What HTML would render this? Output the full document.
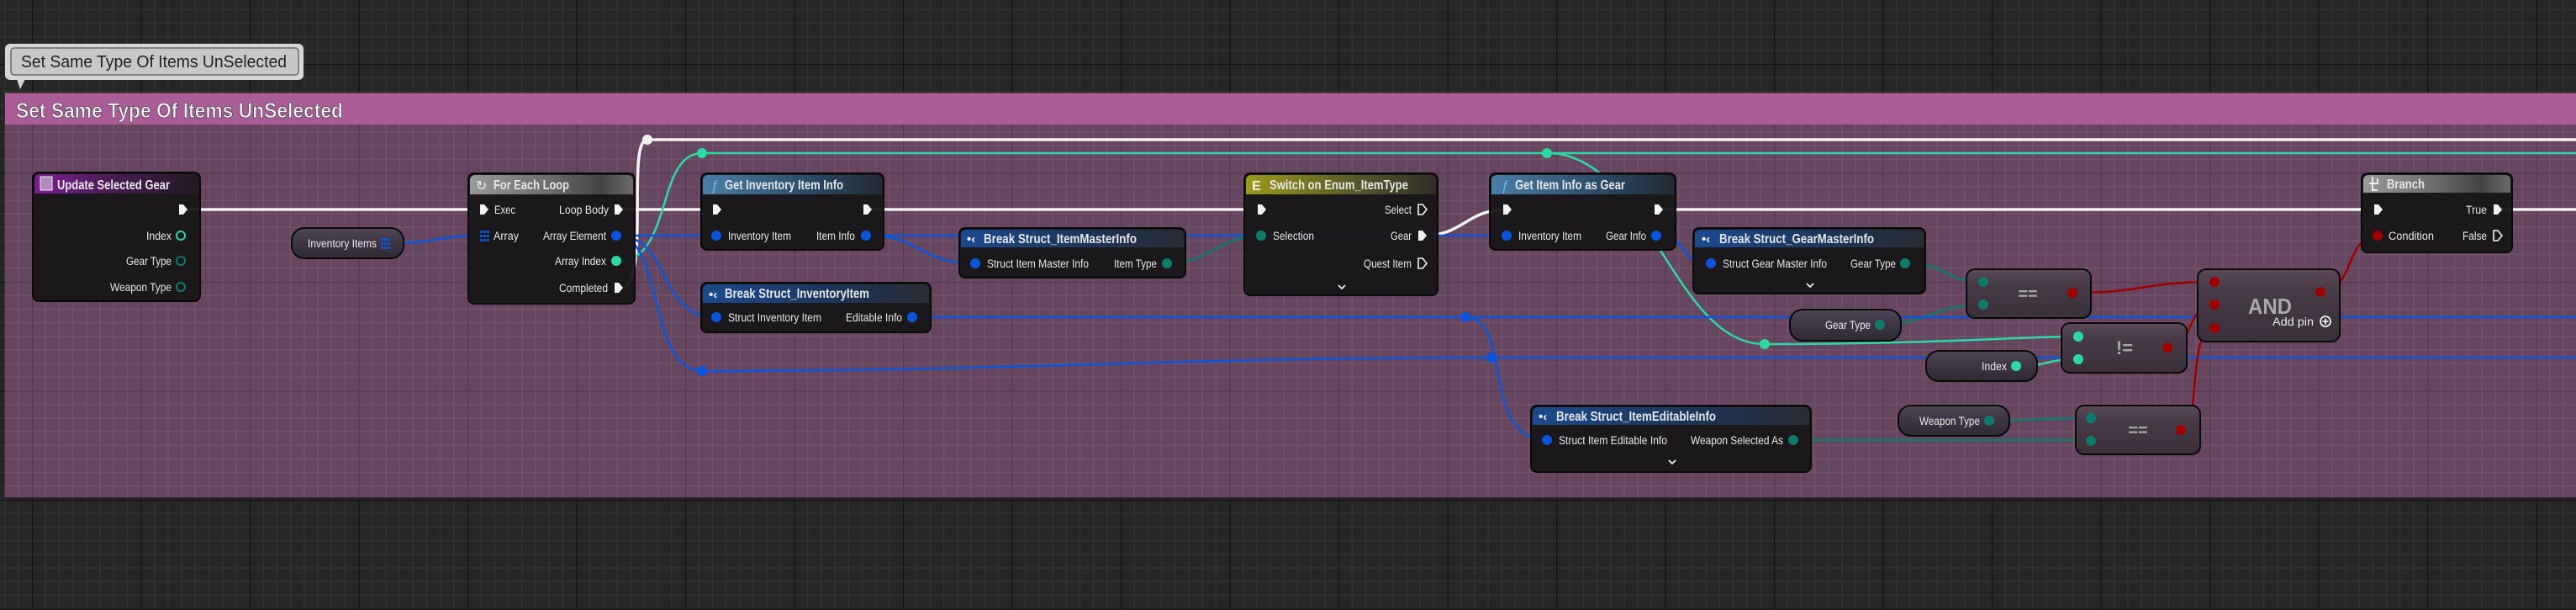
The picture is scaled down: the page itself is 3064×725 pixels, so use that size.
<!DOCTYPE html>
<html><head><meta charset="utf-8"><style>
html,body{margin:0;padding:0;background:#262626;}
svg{display:block}
text{font-family:"Liberation Sans",sans-serif;}
.t{font-size:16px;font-weight:bold;fill:#e6e6e6;}
.l{font-size:13.5px;fill:#e8e8e8;}
</style></head><body>
<svg width="3064" height="725" viewBox="0 0 3064 725" xmlns="http://www.w3.org/2000/svg">
<defs>
<pattern id="gd" patternUnits="userSpaceOnUse" x="38" y="76" width="129.5" height="129.5">
<rect width="129.5" height="129.5" fill="#262626"/>
<g stroke="#303030" stroke-width="1.6">
<path d="M16.2 0V130M32.4 0V130M48.6 0V130M64.8 0V130M81 0V130M97.1 0V130M113.3 0V130"/>
<path d="M0 16.2H130M0 32.4H130M0 48.6H130M0 64.8H130M0 81H130M0 97.1H130M0 113.3H130"/>
</g>
<path d="M0 0V130M0 0H130" stroke="#141414" stroke-width="2.5"/>
</pattern>
<pattern id="gc" patternUnits="userSpaceOnUse" x="38" y="76" width="129.5" height="129.5">
<rect width="129.5" height="129.5" fill="#66455f"/>
<g stroke="#70506a" stroke-width="1.6">
<path d="M16.2 0V130M32.4 0V130M48.6 0V130M64.8 0V130M81 0V130M97.1 0V130M113.3 0V130"/>
<path d="M0 16.2H130M0 32.4H130M0 48.6H130M0 64.8H130M0 81H130M0 97.1H130M0 113.3H130"/>
</g>
<path d="M0 0V130M0 0H130" stroke="#573852" stroke-width="2.5"/>
</pattern>
<linearGradient id="hPur" x1="0" x2="1"><stop offset="0" stop-color="#7d1d93"/><stop offset="0.6" stop-color="#3c1b44"/><stop offset="1" stop-color="#221a24"/></linearGradient>
<linearGradient id="hGry" x1="0" x2="1"><stop offset="0" stop-color="#9a9a9a"/><stop offset="0.5" stop-color="#6a6a6a"/><stop offset="0.8" stop-color="#444"/><stop offset="1" stop-color="#6a6a6a"/></linearGradient>
<linearGradient id="hFn" x1="0" x2="1"><stop offset="0" stop-color="#4a7fa8"/><stop offset="0.6" stop-color="#2a4a66"/><stop offset="1" stop-color="#222a33"/></linearGradient>
<linearGradient id="hSt" x1="0" x2="1"><stop offset="0" stop-color="#1c4a8e"/><stop offset="0.6" stop-color="#1d3356"/><stop offset="1" stop-color="#282c33"/></linearGradient>
<linearGradient id="hSw" x1="0" x2="1"><stop offset="0" stop-color="#9a9a1c"/><stop offset="0.6" stop-color="#55552a"/><stop offset="1" stop-color="#2e2e28"/></linearGradient>
<linearGradient id="pill" x1="0" y1="0" x2="0" y2="1"><stop offset="0" stop-color="#4e4656"/><stop offset="0.5" stop-color="#3d3544"/><stop offset="1" stop-color="#2e2a33"/></linearGradient>
<linearGradient id="op" x1="0" y1="0" x2="0" y2="1"><stop offset="0" stop-color="#5a4a58"/><stop offset="0.3" stop-color="#463a46"/><stop offset="1" stop-color="#3a303a"/></linearGradient>
</defs>

<rect width="3064" height="725" fill="url(#gd)"/>
<!-- comment -->
<rect x="6" y="110" width="3070" height="484" fill="url(#gc)"/>
<rect x="6" y="591" width="3070" height="3" fill="#2a1e28"/>
<rect x="6" y="111" width="3070" height="37" fill="#a95c96"/>
<text x="19" y="140" font-size="25" font-weight="bold" fill="#f0f0f0" stroke="#333" stroke-width="0.6" textLength="389" lengthAdjust="spacingAndGlyphs">Set Same Type Of Items UnSelected</text>
<!-- bubble -->
<rect x="6" y="52" width="355" height="43" rx="6" fill="#d6d6d6"/>
<path d="M20 94 L24 106 L30 94Z" fill="#d6d6d6"/>
<rect x="13" y="57" width="342" height="32" rx="4" fill="#c8c8c8" stroke="#6a6a6a" stroke-width="1.5"/>
<text x="25" y="80" font-size="20" fill="#222" textLength="316" lengthAdjust="spacingAndGlyphs">Set Same Type Of Items UnSelected</text>

<!-- WIRES -->
<g fill="none">
<g stroke="#f2f2f2" stroke-width="3.5">
<path d="M221 249H557"/>
<path d="M738 249H834"/>
<path d="M1034 249H1480"/>
<path d="M1694 280C1740 280 1745 249 1792 249"/>
<path d="M1975 249H2809"/>
<path d="M2973 249H3064"/>
<path d="M738 342C775 342 744 166 770 166H3064"/>
</g>
<g stroke="#2bd9a4" stroke-width="2.5">
<path d="M736 310C800 310 780 182 835 182H3064"/>
<path d="M1840 182C1960 182 1990 409 2099 409C2300 409 2400 400 2472 400"/>
<path d="M2398 435C2440 435 2430 427 2472 427"/>
</g>
<g stroke="#0e7a6c" stroke-width="2.5">
<path d="M1388 313C1440 313 1450 280 1500 280"/>
<path d="M2266 313C2320 313 2310 335 2359 335"/>
<path d="M2236 386C2290 386 2300 362 2359 362"/>
<path d="M2366 500C2420 500 2430 497 2487 497"/>
<path d="M2133 523H2487"/>
</g>
<g stroke="#0b55dd" stroke-width="2.5">
<path d="M464 289C520 289 520 280 575 280"/>
<path d="M733 280H852"/>
<path d="M1051 280H1792"/>
<path d="M733 280C800 280 780 377 852 377"/>
<path d="M733 280C790 280 770 441 835 441C1200 441 1400 425 1774 425H3064"/>
<path d="M1030 280C1100 280 1090 313 1160 313"/>
<path d="M1085 377H3064"/>
<path d="M1743 377C1800 377 1760 523 1840 523"/>
<path d="M1970 280C2010 280 1995 313 2035 313"/>
</g>
<g stroke="#a00000" stroke-width="2.5">
<path d="M2465 348C2550 348 2550 335 2634 335"/>
<path d="M2578 413C2610 413 2600 362 2634 362"/>
<path d="M2594 511C2620 511 2600 390 2634 390"/>
<path d="M2760 347C2800 347 2790 280 2828 280"/>
</g>
</g>
<circle cx="770" cy="166" r="6" fill="#f2f2f2"/>
<circle cx="835" cy="182" r="6" fill="#2bd9a4"/>
<circle cx="1840" cy="182" r="6" fill="#2bd9a4"/>
<circle cx="2099" cy="409" r="6" fill="#2bd9a4"/>
<circle cx="835" cy="441" r="6" fill="#0b55dd"/>
<circle cx="1743" cy="377" r="6" fill="#0b55dd"/>
<circle cx="1774" cy="425" r="6" fill="#0b55dd"/>

<!-- NODES -->
<g stroke="#0a0a0a" stroke-width="2">
<rect x="39" y="205" width="199" height="153" rx="7" fill="#171617" fill-opacity="0.95"/>
<rect x="557" y="206" width="198" height="155" rx="7" fill="#171617" fill-opacity="0.95"/>
<rect x="834" y="206" width="217" height="91" rx="7" fill="#171617" fill-opacity="0.95"/>
<rect x="834" y="336" width="273" height="59" rx="7" fill="#171617" fill-opacity="0.95"/>
<rect x="1141" y="271" width="269" height="59" rx="7" fill="#171617" fill-opacity="0.95"/>
<rect x="1480" y="206" width="230" height="145" rx="7" fill="#171617" fill-opacity="0.95"/>
<rect x="1772" y="206" width="221" height="91" rx="7" fill="#171617" fill-opacity="0.95"/>
<rect x="2014" y="271" width="276" height="78" rx="7" fill="#171617" fill-opacity="0.95"/>
<rect x="1821" y="482" width="333" height="79" rx="7" fill="#171617" fill-opacity="0.95"/>
<rect x="2809" y="206" width="179" height="94" rx="7" fill="#171617" fill-opacity="0.95"/>
<rect x="347" y="271" width="133" height="36" rx="15" fill="url(#pill)"/>
<rect x="2129" y="368" width="132" height="37" rx="15" fill="url(#pill)"/>
<rect x="2291" y="417" width="132" height="36" rx="15" fill="url(#pill)"/>
<rect x="2258" y="482" width="132" height="36" rx="15" fill="url(#pill)"/>
<rect x="2339" y="320" width="148" height="58" rx="10" fill="url(#op)"/>
<rect x="2614" y="320" width="169" height="86" rx="10" fill="url(#op)"/>
<rect x="2452" y="384" width="149" height="59" rx="10" fill="url(#op)"/>
<rect x="2469" y="482" width="148" height="58" rx="10" fill="url(#op)"/>
</g>
<!-- headers -->
<path d="M41 230V213a6 6 0 0 1 6-6H230a6 6 0 0 1 6 6V230Z" fill="url(#hPur)"/>
<path d="M559 231V214a6 6 0 0 1 6-6H747a6 6 0 0 1 6 6V231Z" fill="url(#hGry)"/>
<path d="M836 231V214a6 6 0 0 1 6-6H1043a6 6 0 0 1 6 6V231Z" fill="url(#hFn)"/>
<path d="M836 360V344a6 6 0 0 1 6-6H1099a6 6 0 0 1 6 6V360Z" fill="url(#hSt)"/>
<path d="M1143 294V279a6 6 0 0 1 6-6H1402a6 6 0 0 1 6 6V294Z" fill="url(#hSt)"/>
<path d="M1482 231V214a6 6 0 0 1 6-6H1702a6 6 0 0 1 6 6V231Z" fill="url(#hSw)"/>
<path d="M1774 231V214a6 6 0 0 1 6-6H1985a6 6 0 0 1 6 6V231Z" fill="url(#hFn)"/>
<path d="M2016 294V279a6 6 0 0 1 6-6H2282a6 6 0 0 1 6 6V294Z" fill="url(#hSt)"/>
<path d="M1823 505V490a6 6 0 0 1 6-6H2146a6 6 0 0 1 6 6V505Z" fill="url(#hSt)"/>
<path d="M2811 229V214a6 6 0 0 1 6-6H2980a6 6 0 0 1 6 6V229Z" fill="url(#hGry)"/>

<!-- titles & icons -->
<rect x="48" y="210" width="14" height="16" fill="#b08ab8" stroke="#eee" stroke-width="1"/>
<text class="t" x="68" y="225" textLength="134" lengthAdjust="spacingAndGlyphs">Update Selected Gear</text>
<text x="566" y="226" font-size="16" fill="#eee">&#x21BB;</text>
<text class="t" x="587" y="225" textLength="90" lengthAdjust="spacingAndGlyphs">For Each Loop</text>
<text x="845" y="226" font-size="17" font-style="italic" fill="#7fb2e0">ƒ</text>
<text class="t" x="862" y="225" textLength="141" lengthAdjust="spacingAndGlyphs">Get Inventory Item Info</text>
<text x="843" y="355" font-size="15" font-weight="bold" fill="#eee">&#x2022;&#x2039;</text>
<text class="t" x="862" y="354" textLength="172" lengthAdjust="spacingAndGlyphs">Break Struct_InventoryItem</text>
<text x="1150" y="289" font-size="15" font-weight="bold" fill="#eee">&#x2022;&#x2039;</text>
<text class="t" x="1170" y="289" textLength="182" lengthAdjust="spacingAndGlyphs">Break Struct_ItemMasterInfo</text>
<text x="1489" y="226" font-size="16" font-weight="bold" fill="#eee">E</text>
<text class="t" x="1510" y="225" textLength="165" lengthAdjust="spacingAndGlyphs">Switch on Enum_ItemType</text>
<text x="1785" y="226" font-size="17" font-style="italic" fill="#7fb2e0">ƒ</text>
<text class="t" x="1802" y="225" textLength="131" lengthAdjust="spacingAndGlyphs">Get Item Info as Gear</text>
<text x="2024" y="289" font-size="15" font-weight="bold" fill="#eee">&#x2022;&#x2039;</text>
<text class="t" x="2045" y="289" textLength="184" lengthAdjust="spacingAndGlyphs">Break Struct_GearMasterInfo</text>
<text x="1830" y="500" font-size="15" font-weight="bold" fill="#eee">&#x2022;&#x2039;</text>
<text class="t" x="1851" y="500" textLength="190" lengthAdjust="spacingAndGlyphs">Break Struct_ItemEditableInfo</text>
<path d="M2822 210v8h-4M2822 218h6v-6M2822 218v8h6" stroke="#eee" stroke-width="2" fill="none"/>
<text class="t" x="2839" y="224" textLength="45" lengthAdjust="spacingAndGlyphs" fill="#ddd">Branch</text>

<!-- labels -->
<g class="l" text-anchor="end">
<text class="l" x="204" y="285" textLength="30" lengthAdjust="spacingAndGlyphs">Index</text>
<text class="l" x="204" y="315" textLength="54" lengthAdjust="spacingAndGlyphs">Gear Type</text>
<text class="l" x="204" y="346" textLength="73" lengthAdjust="spacingAndGlyphs">Weapon Type</text>
<text class="l" x="448" y="294" textLength="82" lengthAdjust="spacingAndGlyphs">Inventory Items</text>
<text class="l" x="724" y="254" textLength="59" lengthAdjust="spacingAndGlyphs">Loop Body</text>
<text class="l" x="721" y="285" textLength="75" lengthAdjust="spacingAndGlyphs">Array Element</text>
<text class="l" x="721" y="315" textLength="61" lengthAdjust="spacingAndGlyphs">Array Index</text>
<text class="l" x="723" y="347" textLength="58" lengthAdjust="spacingAndGlyphs">Completed</text>
<text class="l" x="1017" y="285" textLength="46" lengthAdjust="spacingAndGlyphs">Item Info</text>
<text class="l" x="1073" y="382" textLength="67" lengthAdjust="spacingAndGlyphs">Editable Info</text>
<text class="l" x="1376" y="318" textLength="51" lengthAdjust="spacingAndGlyphs">Item Type</text>
<text class="l" x="1679" y="254" textLength="32" lengthAdjust="spacingAndGlyphs">Select</text>
<text class="l" x="1679" y="285" textLength="25" lengthAdjust="spacingAndGlyphs">Gear</text>
<text class="l" x="1679" y="318" textLength="57" lengthAdjust="spacingAndGlyphs">Quest Item</text>
<text class="l" x="1958" y="285" textLength="48" lengthAdjust="spacingAndGlyphs">Gear Info</text>
<text class="l" x="2255" y="318" textLength="54" lengthAdjust="spacingAndGlyphs">Gear Type</text>
<text class="l" x="2225" y="391" textLength="54" lengthAdjust="spacingAndGlyphs">Gear Type</text>
<text class="l" x="2121" y="528" textLength="110" lengthAdjust="spacingAndGlyphs">Weapon Selected As</text>
<text class="l" x="2387" y="440" textLength="30" lengthAdjust="spacingAndGlyphs">Index</text>
<text class="l" x="2355" y="505" textLength="72" lengthAdjust="spacingAndGlyphs">Weapon Type</text>
<text class="l" x="2958" y="254" textLength="25" lengthAdjust="spacingAndGlyphs">True</text>
<text class="l" x="2958" y="285" textLength="29" lengthAdjust="spacingAndGlyphs">False</text>
<text class="l" x="2752" y="387" textLength="49" lengthAdjust="spacingAndGlyphs">Add pin</text>
</g>
<text class="l" x="588" y="254" textLength="25" lengthAdjust="spacingAndGlyphs">Exec</text>
<text class="l" x="587" y="285" textLength="30" lengthAdjust="spacingAndGlyphs">Array</text>
<text class="l" x="866" y="285" textLength="75" lengthAdjust="spacingAndGlyphs">Inventory Item</text>
<text class="l" x="866" y="382" textLength="111" lengthAdjust="spacingAndGlyphs">Struct Inventory Item</text>
<text class="l" x="1174" y="318" textLength="121" lengthAdjust="spacingAndGlyphs">Struct Item Master Info</text>
<text class="l" x="1514" y="285" textLength="49" lengthAdjust="spacingAndGlyphs">Selection</text>
<text class="l" x="1806" y="285" textLength="75" lengthAdjust="spacingAndGlyphs">Inventory Item</text>
<text class="l" x="2049" y="318" textLength="124" lengthAdjust="spacingAndGlyphs">Struct Gear Master Info</text>
<text class="l" x="1854" y="528" textLength="129" lengthAdjust="spacingAndGlyphs">Struct Item Editable Info</text>
<text class="l" x="2841" y="285" textLength="54" lengthAdjust="spacingAndGlyphs">Condition</text>

<!-- op symbols -->
<text x="2412" y="356" font-size="20" font-weight="bold" fill="#a8a8a8" text-anchor="middle">==</text>
<text x="2527" y="421" font-size="22" font-weight="bold" fill="#a8a8a8" text-anchor="middle">!=</text>
<text x="2543" y="518" font-size="20" font-weight="bold" fill="#a8a8a8" text-anchor="middle">==</text>
<text x="2700" y="373" font-size="26" font-weight="bold" fill="#a8a8a8" text-anchor="middle" textLength="52" lengthAdjust="spacingAndGlyphs">AND</text>
<circle cx="2766" cy="382" r="6" fill="none" stroke="#eee" stroke-width="1.8"/>
<path d="M2766 378.5v7M2762.5 382h7" stroke="#eee" stroke-width="1.8"/>
<!-- chevrons -->
<g stroke="#eee" stroke-width="1.8" fill="none">
<path d="M1592 339l4 4 4-4"/><path d="M2149 337l4 4 4-4"/><path d="M1985 547l4 4 4-4"/>
</g>

<!-- exec pins -->
<g fill="#f2f2f2">
<path d="M213 243h5l5 6-5 6h-5z"/>
<path d="M571 243h5l5 6-5 6h-5z"/>
<path d="M731 243h5l5 6-5 6h-5z"/>
<path d="M731 336h5l5 6-5 6h-5z"/>
<path d="M848 243h5l5 6-5 6h-5z"/>
<path d="M1027 243h5l5 6-5 6h-5z"/>
<path d="M1496 243h5l5 6-5 6h-5z"/>
<path d="M1687 274h5l5 6-5 6h-5z"/>
<path d="M1788 243h5l5 6-5 6h-5z"/>
<path d="M1968 243h5l5 6-5 6h-5z"/>
<path d="M2824 243h5l5 6-5 6h-5z"/>
<path d="M2966 243h5l5 6-5 6h-5z"/>
</g>
<g fill="none" stroke="#f2f2f2" stroke-width="1.6">
<path d="M1687 243h5l5 6-5 6h-5z"/>
<path d="M1687 307h5l5 6-5 6h-5z"/>
<path d="M2966 274h5l5 6-5 6h-5z"/>
</g>
<!-- data pins -->
<g fill="none" stroke-width="2">
<circle cx="215" cy="280" r="5" stroke="#2bd9a4"/>
<circle cx="215" cy="310" r="5" stroke="#0e7a6c"/>
<circle cx="215" cy="341" r="5" stroke="#0e7a6c"/>
</g>
<g fill="#0b55dd">
<circle cx="733" cy="280" r="6"/><circle cx="852" cy="280" r="6"/><circle cx="1030" cy="280" r="6"/>
<circle cx="852" cy="377" r="6"/><circle cx="1085" cy="377" r="6"/><circle cx="1160" cy="313" r="6"/>
<circle cx="1792" cy="280" r="6"/><circle cx="1970" cy="280" r="6"/><circle cx="2035" cy="313" r="6"/>
<circle cx="1840" cy="523" r="6"/>
<rect x="453" y="283" width="3" height="3"/><rect x="457" y="283" width="3" height="3"/><rect x="461" y="283" width="3" height="3"/>
<rect x="453" y="288" width="3" height="3"/><rect x="457" y="288" width="3" height="3"/><rect x="461" y="288" width="3" height="3"/>
<rect x="453" y="293" width="3" height="3"/><rect x="457" y="293" width="3" height="3"/><rect x="461" y="293" width="3" height="3"/>
<rect x="571" y="274" width="3" height="3"/><rect x="575" y="274" width="3" height="3"/><rect x="579" y="274" width="3" height="3"/>
<rect x="571" y="279" width="3" height="3"/><rect x="575" y="279" width="3" height="3"/><rect x="579" y="279" width="3" height="3"/>
<rect x="571" y="284" width="3" height="3"/><rect x="575" y="284" width="3" height="3"/><rect x="579" y="284" width="3" height="3"/>
</g>
<g fill="#2bd9a4">
<circle cx="733" cy="310" r="6"/><circle cx="2398" cy="435" r="6"/>
<circle cx="2472" cy="400" r="6"/><circle cx="2472" cy="427" r="6"/>
</g>
<g fill="#0e7a6c">
<circle cx="1388" cy="313" r="6"/><circle cx="1500" cy="280" r="6"/><circle cx="2266" cy="313" r="6"/>
<circle cx="2236" cy="386" r="6"/><circle cx="2133" cy="523" r="6"/><circle cx="2366" cy="500" r="6"/>
<circle cx="2359" cy="335" r="6"/><circle cx="2359" cy="362" r="6"/>
<circle cx="2487" cy="497" r="6"/><circle cx="2487" cy="524" r="6"/>
</g>
<g fill="#a00000">
<circle cx="2465" cy="348" r="6"/><circle cx="2578" cy="413" r="6"/><circle cx="2594" cy="511" r="6"/>
<circle cx="2634" cy="335" r="6"/><circle cx="2634" cy="362" r="6"/><circle cx="2634" cy="390" r="6"/>
<circle cx="2760" cy="347" r="6"/><circle cx="2828" cy="280" r="6"/>
</g>
</svg>
</body></html>
